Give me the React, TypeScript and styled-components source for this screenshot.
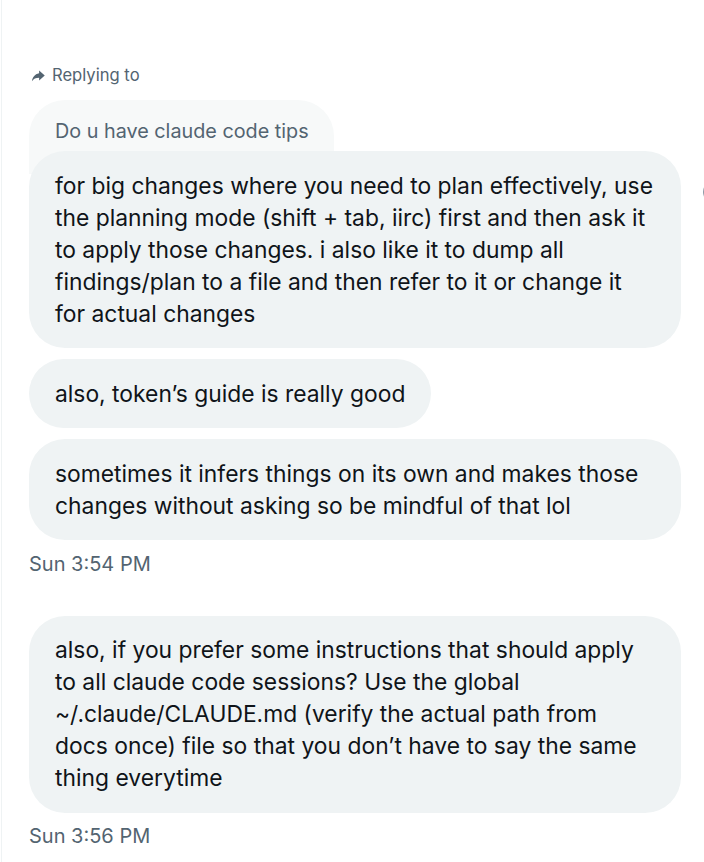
import React from 'react'
import styled, { createGlobalStyle } from 'styled-components'

const GlobalStyle = createGlobalStyle`
  html, body {
    margin: 0;
    padding: 0;
    background: #ffffff;
    overflow: hidden;
  }
  body {
    font-family: Inter, "Liberation Sans", Arial, sans-serif;
    color: #0f1419;
    -webkit-font-smoothing: antialiased;
  }
`

const Thread = styled.div`
  position: relative;
  min-height: 862px;
  margin-left: 1px;
  border-left: 1px solid #eff3f4;
  padding: 64px 24px 0 27px;
  box-sizing: border-box;
  display: flex;
  flex-direction: column;
  align-items: flex-start;
`

const ReplyLabel = styled.div`
  display: flex;
  align-items: center;
  gap: 6px;
  height: 22px;
  font-size: 16.6px;
  line-height: 22px;
  color: #536471;
  padding-left: 2px;
`

const QuotedBubble = styled.div`
  background: #f7f9f9;
  color: #536471;
  font-size: 19.8px;
  line-height: 25px;
  padding: 18.5px 25px 30px 26px;
  border-radius: 36px 36px 0 0;
  margin-top: 14px;
  margin-bottom: -22.5px;
`

const Group = styled.div`
  display: flex;
  flex-direction: column;
  align-items: flex-start;
  gap: 11px;
`

const Row = styled.div`
  position: relative;
  display: flex;
`

const Bubble = styled.div<{ $fit?: boolean }>`
  position: relative;
  box-sizing: border-box;
  width: ${p => (p.$fit ? 'auto' : '652px')};
  background: #eff3f4;
  border-radius: 36px;
  padding: 18.5px 26px;
  font-size: 22.85px;
  line-height: 32px;
  white-space: nowrap;
`

const Stamp = styled.div<{ $gap: number }>`
  margin-top: ${p => p.$gap}px;
  font-size: 20px;
  line-height: 25px;
  color: #536471;
`

const ActionRing = styled.span`
  position: absolute;
  left: 674px;
  top: 30px;
  width: 18px;
  height: 18px;
  border: 2px solid #8b98a5;
  border-radius: 50%;
`

const Section = styled.div<{ $top?: number }>`
  display: flex;
  flex-direction: column;
  margin-top: ${p => p.$top ?? 0}px;
`

const ReplyIcon = () => (
  <svg width="15" height="15" viewBox="0 0 24 24" fill="#536471" aria-hidden="true">
    <path d="M13 8.5V4l9 8-9 8v-4.6c-5.4 0-9.1 1.8-11.5 5.6 0.9-5.6 4.2-11 11.5-12.5z" />
  </svg>
)

const Lines = ({ lines }: { lines: string[] }) => (
  <>
    {lines.map((l, i) => (
      <React.Fragment key={i}>
        {l}
        {i < lines.length - 1 && <br />}
      </React.Fragment>
    ))}
  </>
)

export default function App() {
  return (
    <>
      <GlobalStyle />
      <Thread>
        <ReplyLabel>
          <ReplyIcon />
          Replying to
        </ReplyLabel>

        <QuotedBubble>Do u have claude code tips</QuotedBubble>

        <Section>
          <Group>
            <Row>
              <Bubble>
                <Lines
                  lines={[
                    'for big changes where you need to plan effectively, use',
                    'the planning mode (shift + tab, iirc) first and then ask it',
                    'to apply those changes. i also like it to dump all',
                    'findings/plan to a file and then refer to it or change it',
                    'for actual changes',
                  ]}
                />
              </Bubble>
              <ActionRing />
            </Row>
            <Bubble $fit>also, token’s guide is really good</Bubble>
            <Bubble>
              <Lines
                lines={[
                  'sometimes it infers things on its own and makes those',
                  'changes without asking so be mindful of that lol',
                ]}
              />
            </Bubble>
          </Group>
          <Stamp $gap={12}>Sun 3:54 PM</Stamp>
        </Section>

        <Section $top={38.5}>
          <Bubble>
            <Lines
              lines={[
                'also, if you prefer some instructions that should apply',
                'to all claude code sessions? Use the global',
                '~/.claude/CLAUDE.md (verify the actual path from',
                'docs once) file so that you don’t have to say the same',
                'thing everytime',
              ]}
            />
          </Bubble>
          <Stamp $gap={11.5}>Sun 3:56 PM</Stamp>
        </Section>
      </Thread>
    </>
  )
}
